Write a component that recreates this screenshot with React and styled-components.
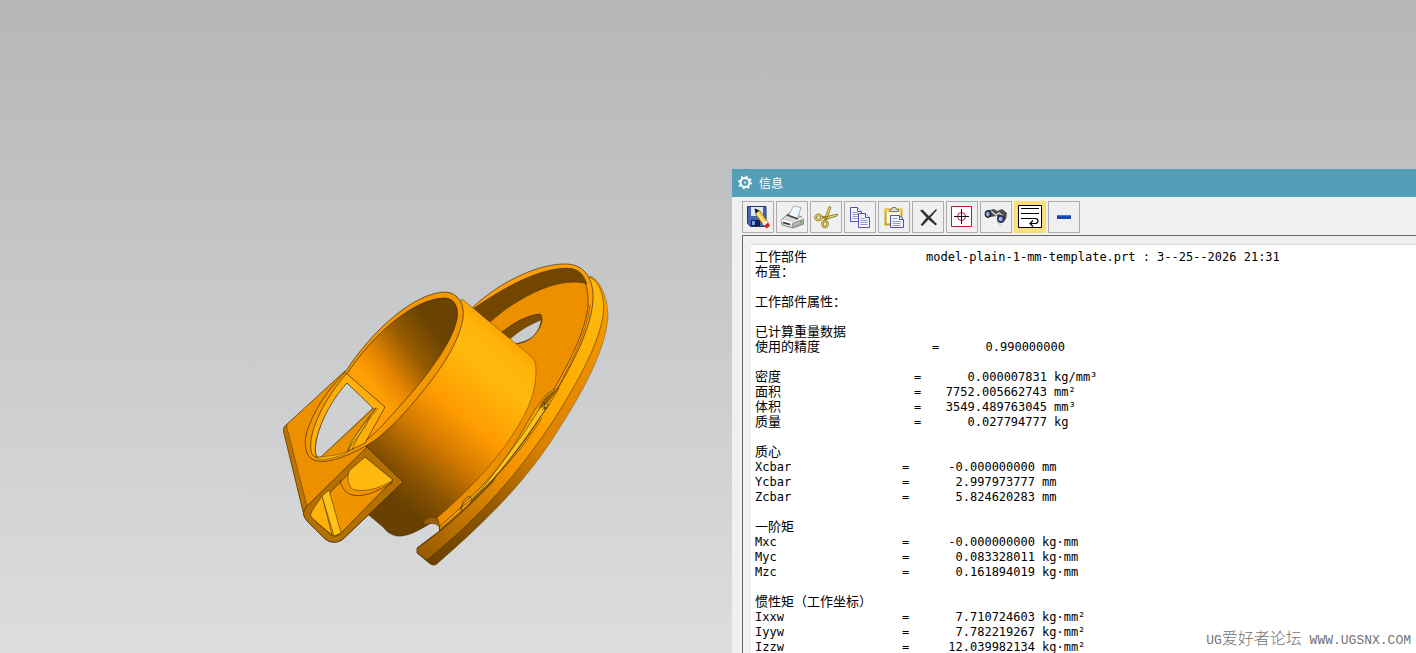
import React from "react"
import styled, { createGlobalStyle } from "styled-components"

const GlobalStyle = createGlobalStyle`
  * {
    box-sizing: border-box;
  }

  body {
    margin: 0;
    overflow: hidden;
  }
`

const Viewport = styled.main`
  position: relative;
  height: 100vh;
  overflow: hidden;
  background: linear-gradient(#b5b6b7, #c9cacc 50%, #dcdddf);
`

// The part sits freely in the graphics area
const PartDrawing = styled.svg`
  position: absolute;
  left: 270px;
  top: 250px;
  width: 350px;
  height: 330px;
`

const InfoWindow = styled.section`
  position: absolute;
  left: 732px;
  top: 169px;
  right: 0;
  bottom: 0;
  display: flex;
  flex-direction: column;
  overflow: hidden;
  background: #f0f0f0;
`

const TitleBar = styled.header`
  display: flex;
  flex: none;
  align-items: center;
  gap: 6px;
  height: 28px;
  padding: 0 5px;
  background: #549fb8;
`

const Title = styled.h1`
  margin: 0;
  color: #fff;
  font: 400 12px/28px "Noto Sans CJK SC", sans-serif;
`

const Toolbar = styled.div`
  display: flex;
  flex: none;
  gap: 2px;
  padding: 4px 10px 2px;
`

const ToolButton = styled.button`
  display: flex;
  align-items: center;
  justify-content: center;
  width: 32px;
  height: 32px;
  padding: 0;
  border: 1px solid ${(props) => (props.$active ? "#f8dc78" : "#adadad")};
  background: ${(props) => (props.$active ? "#fbdf7a" : "#f0f0f0")};
`

const ReportFrame = styled.div`
  display: flex;
  flex: 1;
  min-height: 0;
  margin-left: 10px;
  padding: 8px 0 0 8px;
  border: solid #696969;
  border-width: 1px 0 0 1px;
`

const Report = styled.div`
  display: flex;
  flex: 1;
  flex-direction: column;
  gap: 15px;
  padding: 5px 4px 0;
  overflow: hidden;
  border-top: 1px solid #dcdcdc;
  background: #fff;
  color: #000;
  font: 12px/15px "DejaVu Sans Mono", "Noto Sans CJK SC", monospace;
`

const Caption = styled.h2`
  margin: 0;
  font: 400 13px/15px "Liberation Mono", "Noto Sans CJK SC", monospace;
`

const Sheet = styled.table`
  border-collapse: collapse;
  table-layout: fixed;
  width: ${(props) => props.$label + 333}px;
`

const Label = styled.th`
  width: ${(props) => props.$width}px;
  height: 15px;
  padding: 0;
  font-family: ${(props) =>
    props.$chinese ? '"Liberation Mono", "Noto Sans CJK SC", monospace' : "inherit"};
  font-size: ${(props) => (props.$chinese ? "13px" : "12px")};
  font-weight: 400;
  line-height: 15px;
  text-align: left;
  vertical-align: top;
  white-space: nowrap;
`

const Cell = styled.td`
  width: ${(props) => props.$width}px;
  height: 15px;
  padding: 0;
  text-align: ${(props) => props.$align || "left"};
  vertical-align: top;
  white-space: pre;
`

const Unit = styled(Cell)`
  padding-left: 7px;
`

const Watermark = styled.div`
  position: absolute;
  right: 5px;
  bottom: 4px;
  color: #747474;
  font: 300 13px/16px "Liberation Mono", monospace;
  white-space: pre;
`

const WatermarkName = styled.span`
  font: 300 16px/16px "Noto Sans CJK SC", sans-serif;
`

const sections = [
  {
    caption: "已计算重量数据",
    label: 177,
    chinese: true,
    rows: [["使用的精度", "0.990000000", ""]],
  },
  {
    label: 159,
    chinese: true,
    rows: [
      ["密度", "0.000007831", "kg/mm³"],
      ["面积", "7752.005662743", "mm²"],
      ["体积", "3549.489763045", "mm³"],
      ["质量", "0.027794777", "kg"],
    ],
  },
  {
    caption: "质心",
    label: 147,
    rows: [
      ["Xcbar", "-0.000000000", "mm"],
      ["Ycbar", "2.997973777", "mm"],
      ["Zcbar", "5.824620283", "mm"],
    ],
  },
  {
    caption: "一阶矩",
    label: 147,
    rows: [
      ["Mxc", "-0.000000000", "kg·mm"],
      ["Myc", "0.083328011", "kg·mm"],
      ["Mzc", "0.161894019", "kg·mm"],
    ],
  },
  {
    caption: "惯性矩（工作坐标）",
    label: 147,
    rows: [
      ["Ixxw", "7.710724603", "kg·mm²"],
      ["Iyyw", "7.782219267", "kg·mm²"],
      ["Izzw", "12.039982134", "kg·mm²"],
    ],
  },
]

const Icon = (props) => (
  <svg width="24" height="24" viewBox="0 0 24 24" aria-hidden="true">
    {props.children}
  </svg>
)

const GearIcon = () => (
  <svg width="16" height="16" viewBox="0 0 16 16" aria-hidden="true">
    <g stroke="#fff" fill="none">
      <circle cx="8" cy="7.500" r="4.500" strokeWidth="2" />
      <circle cx="8" cy="7.500" r="6" strokeWidth="2" strokeDasharray="1.800 2.910" />
      <circle cx="8" cy="7.500" r="1" fill="#fff" stroke="none" />
    </g>
  </svg>
)

const SaveIcon = () => (
  <Icon>
    <path d="M1.500 1.500h18.500v20H4.500l-3-3z" fill="#4865b4" stroke="#25346f" />
    <path d="M5 2h12v9H5z" fill="#dcecf8" />
    <path d="M5 15h9v6H5z" fill="#14214e" />
    <path d="M6 16h3v4H6z" fill="#7ea2df" />
    <path d="M9 4l5 2 8 11-4 4-8-11z" fill="#f6c443" stroke="#785316" strokeWidth=".7" />
    <path d="M11.500 8l7 10" stroke="#fff0a0" strokeWidth="1.600" />
    <path d="M8.500 3.500l4.500 2-3 3z" fill="#111" />
    <path d="M22 17l2 4-3.500 2.500-2.500-3z" fill="#cf2a20" />
    <path d="M20.500 15.500l1.700 1.700-4 3.500-1.500-2z" fill="#eee" />
  </Icon>
)

const PrintIcon = () => (
  <Icon>
    <path d="M1 15l8-7 13 4 2 4v3l-11 4L2 20z" fill="#d8d8d8" stroke="#777" strokeWidth=".8" />
    <path d="M1.500 15.500L12 18l11-5" fill="none" stroke="#fff" strokeWidth="1.500" />
    <path d="M12.500 18v4.500l11-4V14z" fill="#b5b5b5" stroke="#777" strokeWidth=".6" />
    <path d="M13.500 1L21 2.500l-3.500 11-9-3z" fill="#eff9ff" stroke="#8a9dab" strokeWidth=".8" />
    <path d="M7 10l11 4" stroke="#444" strokeWidth="1.500" />
    <path d="M3 17.500l7 2" stroke="#333" strokeWidth="1.600" />
    <circle cx="21" cy="17" r="1" fill="#42a348" />
  </Icon>
)

const CutIcon = () => (
  <Icon>
    <path d="M15 1.500l2 1-4 11-2-1zM23.500 9l-.5 2-11 3.500-1-2.500z" fill="#f0dc69" stroke="#766724" strokeWidth=".8" />
    <path d="M7 12l5 .5M12 12l-1 5" stroke="#9b842b" strokeWidth="2.500" />
    <ellipse cx="4.500" cy="12.500" rx="3" ry="2.600" fill="none" stroke="#8b772b" strokeWidth="2.600" />
    <ellipse cx="4.500" cy="12.500" rx="3" ry="2.600" fill="none" stroke="#e2ca5b" strokeWidth="1.200" />
    <ellipse cx="11" cy="19" rx="2.500" ry="3" fill="none" stroke="#8b772b" strokeWidth="2.600" />
    <ellipse cx="11" cy="19" rx="2.500" ry="3" fill="none" stroke="#e2ca5b" strokeWidth="1.200" />
  </Icon>
)

const CopyIcon = () => (
  <Icon>
    <g fill="#f5f7ff" stroke="#5450b5">
      <path d="M2.500 2.500h7l4 4v10h-11z" />
      <path d="M9.500 2.500v4h4" />
      <path d="M4.500 7.500h5M4.500 9.500h7M4.500 11.500h7M4.500 13.500h7" stroke="#8f9ccf" />
      <path d="M10.500 8.500h7l4 4v10h-11z" />
      <path d="M17.500 8.500v4h4" />
      <path d="M12.500 13.500h4M12.500 15.500h7M12.500 17.500h7M12.500 19.500h7" stroke="#8f9ccf" />
    </g>
  </Icon>
)

const PasteIcon = () => (
  <Icon>
    <path d="M3.500 4.500h16v15h-16z" fill="#fff7d1" stroke="#c9a41e" strokeWidth="2" />
    <path d="M3 5h17" stroke="#f5d340" strokeWidth="3" />
    <path d="M7.500 6.500v-2h2l1-2h3l1 2h2v2z" fill="#ddd" stroke="#777" />
    <path d="M8.500 10.500h9l4 4v8h-13z" fill="#f5f7ff" stroke="#5450b5" />
    <path d="M17.500 10.500v4h4" fill="none" stroke="#5450b5" />
    <path d="M10.500 13.500h5M10.500 16.500h8M10.500 18.500h8M10.500 20.500h8" stroke="#8f9ccf" />
  </Icon>
)

const DeleteIcon = () => (
  <Icon>
    <path d="M4 5.500l2.500-1 6.500 6.500 7-7 1 1-6.500 7.500 6.500 6.500-1.500 1.500-7-6-6 6.500-2-1 6-7.500z" fill="#343434" />
  </Icon>
)

const TargetIcon = () => (
  <Icon>
    <path d="M1.500 1.500h20v20h-20z" fill="#fff" stroke="#c41729" />
    <circle cx="11.500" cy="11.500" r="4" fill="none" stroke="#c41729" />
    <path d="M4 11.500h15M11.500 4v15" stroke="#111" />
  </Icon>
)

const FindIcon = () => (
  <Icon>
    <path d="M2 6l8-2 3 2 5-2 5 4-1 6-6 4-3-7-7 1z" fill="#4d4d4d" />
    <path d="M7 6l5 4 3-2 4 3" fill="none" stroke="#cfcfcf" strokeWidth="1.500" />
    <path d="M13 15l2 4 3 2" fill="none" stroke="#bdbdbd" />
    <ellipse cx="4" cy="9" rx="3" ry="3.500" fill="#454e8c" stroke="#1e1e26" />
    <ellipse cx="3.700" cy="9" rx="1.300" ry="2" fill="#b5bcf3" />
    <ellipse cx="17" cy="14" rx="3.500" ry="3.500" fill="#454e8c" stroke="#1e1e26" />
    <ellipse cx="16.500" cy="14" rx="1.800" ry="2" fill="#aeb7f4" />
  </Icon>
)

const WrapIcon = () => (
  <Icon>
    <path d="M.5.5h23v22H.5z" fill="#fff" stroke="#000" />
    <path d="M3 3.500h18M3 8.500h18M3 13.500h14c4 0 4 5 0 5h-5M15 15.500l-3 3 3 3" fill="none" stroke="#000" strokeWidth="1.200" />
  </Icon>
)

const MinusIcon = () => (
  <Icon>
    <path d="M5 10h14v4H5z" fill="#1747b5" />
    <path d="M5 10h14v1H5z" fill="#3e76dc" />
  </Icon>
)

const tools = [
  { name: "保存", icon: SaveIcon },
  { name: "打印", icon: PrintIcon },
  { name: "剪切", icon: CutIcon },
  { name: "复制", icon: CopyIcon },
  { name: "粘贴", icon: PasteIcon },
  { name: "删除", icon: DeleteIcon },
  { name: "定位", icon: TargetIcon },
  { name: "查找", icon: FindIcon },
  { name: "自动换行", icon: WrapIcon, active: true },
  { name: "最小化", icon: MinusIcon },
]

const FlangedPart = () => (
  <PartDrawing viewBox="270 250 350 330" role="img" aria-label="3D part">
    <defs>
      <linearGradient id="rim" gradientUnits="userSpaceOnUse" x1="425" y1="555" x2="600" y2="300">
        <stop offset="0" stopColor="#9a5c00" />
        <stop offset=".2" stopColor="#c87a00" />
        <stop offset=".4" stopColor="#f59400" />
        <stop offset=".62" stopColor="#ffa800" />
        <stop offset="1" stopColor="#ffb90c" />
      </linearGradient>
      <linearGradient id="rimSide" gradientUnits="userSpaceOnUse" x1="430" y1="562" x2="606" y2="300">
        <stop offset="0" stopColor="#6a4000" />
        <stop offset=".22" stopColor="#8d5500" />
        <stop offset=".5" stopColor="#d98000" />
        <stop offset="1" stopColor="#f79a00" />
      </linearGradient>
      <linearGradient id="barrel" gradientUnits="userSpaceOnUse" x1="395" y1="500" x2="526" y2="342">
        <stop offset="0" stopColor="#684000" />
        <stop offset=".14" stopColor="#885200" />
        <stop offset=".36" stopColor="#d97d00" />
        <stop offset=".52" stopColor="#ff9b00" />
        <stop offset=".78" stopColor="#ffb90e" />
        <stop offset=".9" stopColor="#ffb408" />
        <stop offset="1" stopColor="#ff9f00" />
      </linearGradient>
      <linearGradient id="bore" gradientUnits="userSpaceOnUse" x1="438" y1="335" x2="372" y2="385">
        <stop offset="0" stopColor="#6b4300" />
        <stop offset=".35" stopColor="#935a00" />
        <stop offset=".75" stopColor="#e88700" />
        <stop offset="1" stopColor="#ff9f05" />
      </linearGradient>
    </defs>

    <g stroke="#352406" strokeWidth=".65" strokeLinejoin="round">
      {/* flange */}
      <path d="M590 276C602 281 608 301 608 316C606 353 578 400 550 443C521 486 485 522 438 563Q435 567 430 564L417 553V548C490 490 544 415 570 310Z" fill="url(#rimSide)" strokeWidth=".3" />
      <path d="M590 277C602 284 605 300 603 316C598 344 582 375 555 418C520 472 480 517 427 560L417 553V548C445 530 475 500 493 482L570 305Z" fill="url(#rim)" strokeWidth=".5" />
      <path d="M473 307C502 280 541 263 567 264C586 265 594 281 593 300C591 337 558 390 532 430C500 476 467 509 440 530L427 514L490 420Z" fill="#ffa006" />
      <path d="M475 309C509 284 541 269 567 269C583 269 589 285 588 306C585 338 558 384 533 423C503 468 467 503 439 527L430 520L480 420Z" fill="#ed9000" />
      <path d="M474 308C509 284 541 268 567 268C578 268 584 274 587 284C561 276 520 295 489 323Z" fill="#734600" strokeWidth=".3" />
      <path d="M590 305C587 338 560 386 535 425C505 470 469 505 441 528" fill="none" strokeWidth=".5" />
      <path d="M498 335C514 322 528 315 540 314C545 319 540 331 530 339C524 343 518 344 511 344Z" fill="#7b4c00" />
      <path d="M508 341C517 332 529 325 541 320C540 329 534 338 525 341Q517 344 511 344Z" fill="#cbccce" strokeWidth=".3" />
      <path d="M523 430C530 417 539 402 547 394Q553 389 559 388C552 401 540 419 529 432C508 462 486 487 462 511Q460 505 468 499C490 480 507 458 523 430Z" fill="#eda009" strokeWidth=".5" />
      <path d="M526 430L542 405L549 404L534 426C512 458 492 482 471 502Q490 480 526 430Z" fill="#ffc514" strokeWidth=".5" />
      <path d="M539 409Q543 396 558 389L548 402Z" fill="#9b6000" strokeWidth=".3" />
      <path d="M541 406l6 3m-5 1l7-5m-5-3l1 8" fill="none" />
      <path d="M542 418C521 452 490 486 458 510M461 510Q462 498 470 496L472 501" fill="none" strokeWidth=".5" />
      <path d="M424 521Q430 513 437 519L440 530L431 535L427 522Z" fill="#a86500" />
      <path d="M417 547L424 525Q437 519 439 527L439 531Z" fill="#d5d6d8" stroke="none" />

      {/* barrel */}
      <path d="M462 299L532 357Q536 360 536 370C536 400 522 421 505 446C482 478 452 505 431 523C417 532 406 537 397 536Q389 535 383 527L365 512L347 450L430 380Z" fill="url(#barrel)" strokeWidth=".4" />
      <path d="M424 521Q431 514 438 519L440 528Q436 521 424 525Z" fill="#995d00" strokeWidth=".4" />

      {/* bracket */}
      <path d="M345 371L287 424Q282 428 284 433L303 511Q304 518 308 522L325 539Q333 545 342 540L403 482L366 447L386 407Z" fill="#ed9000" />
      <path d="M287 424Q282 428 284 433L303 511L307 506L287 428Z" fill="#bd7300" strokeWidth=".4" />

      {/* mouth of the barrel */}
      <path d="M346 371C371 332 414 292 446 292C458 293 465 304 463 318C459 345 436 377 407 410C393 425 378 440 364 447C342 459 324 464 314 460C304 456 303 440 309 426C318 402 332 386 346 371Z" fill="#f39700" />
      <path d="M347 374C371 337 412 299 444 298C455 298 459 308 457 319C452 345 421 383 399 407Q382 427 366 441L350 430L332 400Z" fill="url(#bore)" />
      <path d="M346 374C325 399 308 430 311 451C313 463 334 459 365 443L385 407L346 373Z" fill="#ffae0a" />
      <path d="M347 383L373 409L365 427L345 454Q325 461 318 459C310 450 318 421 347 383Z" fill="#ffc018" strokeWidth=".4" />
      <path d="M347 383L373 408L321 457L317 457C311 446 323 409 347 383Z" fill="#cfd0d2" />
      <path d="M373 409L321 457Q336 456 347 452L352 440L376 408Z" fill="#ea9100" strokeWidth=".4" />
      <path d="M376 408C362 425 352 440 348 452M378 408C365 424 357 437 352 450" fill="none" strokeWidth=".5" />

      {/* square tube */}
      <path d="M367 447L403 482L342 540Q333 545 325 539L308 522Q302 516 304 511L307 506Z" fill="#b47000" />
      <path d="M365 457L393 480L341 533Q336 538 331 535L312 518Q309 515 312 511Z" fill="#f09400" />
      <path d="M349 471L365 457L393 480C377 491 360 492 352 489Q346 483 349 471Z" fill="#ffb80e" strokeWidth=".5" />
      <path d="M340 480C344 501 365 500 393 482" fill="none" />
      <path d="M322 496L312 511Q309 515 312 518L332 535Z" fill="#ffb30a" strokeWidth=".5" />
      <path d="M322 496L329 490L341 533L334 536Z" fill="#ffc216" strokeWidth=".5" />
    </g>
  </PartDrawing>
)

const ReportSection = (props) => (
  <div>
    {props.caption && <Caption>{props.caption}</Caption>}
    <Sheet $label={props.label}>
      <tbody>
        {props.rows.map(([name, value, unit]) => (
          <tr key={name}>
            <Label scope="row" $width={props.label} $chinese={props.chinese}>
              {name}
            </Label>
            <Cell $width={14}>=</Cell>
            <Cell $width={119} $align="right">
              {value}
            </Cell>
            <Unit $width={200}>{unit}</Unit>
          </tr>
        ))}
      </tbody>
    </Sheet>
  </div>
)

const App = () => {
  return (
    <>
      <GlobalStyle />
      <Viewport>
        <FlangedPart />
        <InfoWindow aria-label="信息">
          <TitleBar>
            <GearIcon />
            <Title>信息</Title>
          </TitleBar>
          <Toolbar role="toolbar">
            {tools.map(({ name, icon: ToolIcon, active }) => (
              <ToolButton key={name} type="button" aria-label={name} $active={active}>
                <ToolIcon />
              </ToolButton>
            ))}
          </Toolbar>
          <ReportFrame>
            <Report>
              <Sheet $label={171}>
                <tbody>
                  <tr>
                    <Label scope="row" $width={171} $chinese>
                      工作部件
                    </Label>
                    <Cell $width={231}>model-plain-1-mm-template.prt :</Cell>
                    <Cell>3--25--2026 21:31</Cell>
                  </tr>
                  <tr>
                    <Label scope="row" $chinese>
                      布置：
                    </Label>
                  </tr>
                </tbody>
              </Sheet>
              <Caption>工作部件属性：</Caption>
              {sections.map((section) => (
                <ReportSection key={section.rows[0][0]} {...section} />
              ))}
            </Report>
          </ReportFrame>
        </InfoWindow>
        <Watermark>
          UG<WatermarkName>爱好者论坛</WatermarkName> WWW.UGSNX.COM
        </Watermark>
      </Viewport>
    </>
  )
}

export default App
